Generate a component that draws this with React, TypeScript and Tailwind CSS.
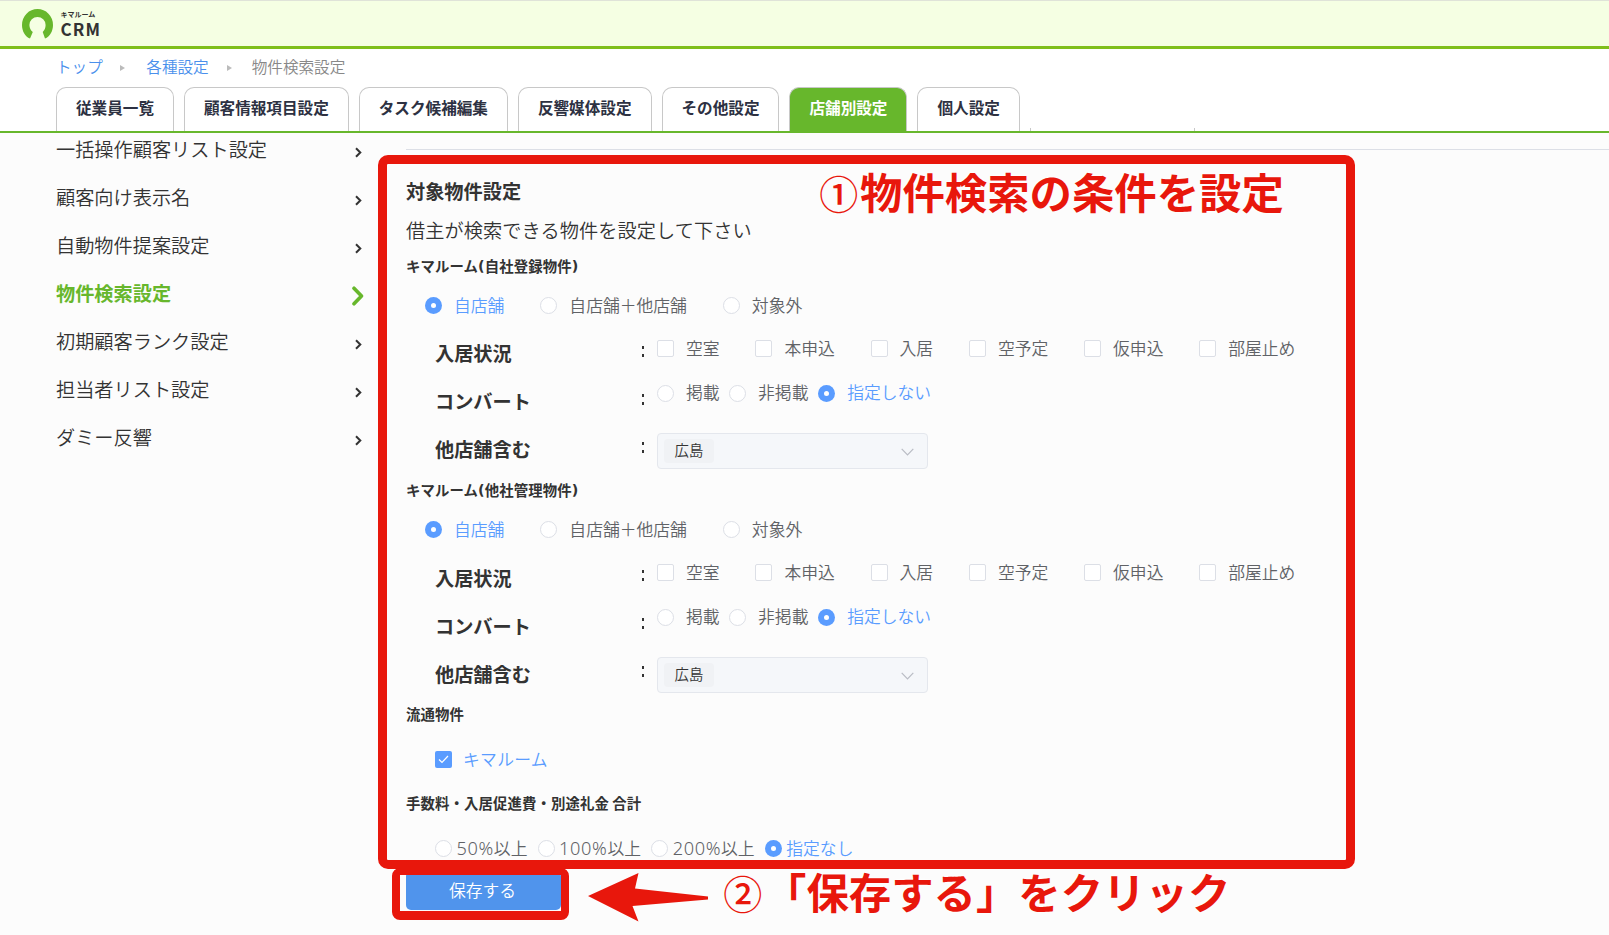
import React from 'react';

const tabs = ['従業員一覧', '顧客情報項目設定', 'タスク候補編集', '反響媒体設定', 'その他設定', '店舗別設定', '個人設定'];
const menu = [
  '一括操作顧客リスト設定',
  '顧客向け表示名',
  '自動物件提案設定',
  '物件検索設定',
  '初期顧客ランク設定',
  '担当者リスト設定',
  'ダミー反響',
];

function Radio({ label, checked, gap = 'gap-[12px]' }: { label: React.ReactNode; checked?: boolean; gap?: string }) {
  return (
    <label className={`flex items-center whitespace-nowrap ${gap} ${checked ? 'text-[#5a9cff]' : 'text-[#606266]'}`}>
      <span
        className={`flex size-[17px] shrink-0 items-center justify-center rounded-full ${
          checked ? 'bg-[#5a9cff]' : 'border border-[#dcdfe6] bg-white'
        }`}
      >
        {checked && <span className="size-[5px] rounded-full bg-white" />}
      </span>
      <span>{label}</span>
    </label>
  );
}

function Check({ label, checked }: { label: string; checked?: boolean }) {
  return (
    <label className={`flex items-center whitespace-nowrap ${checked ? 'gap-[11px] tracking-[0.3px] text-[#5a9cff]' : 'gap-[12px] text-[#606266]'}`}>
      <span
        className={`flex size-[17px] shrink-0 items-center justify-center rounded-[2px] ${
          checked ? 'bg-[#5a9cff]' : 'border border-[#dcdfe6] bg-white'
        }`}
      >
        {checked && (
          <svg width="11" height="9" viewBox="0 0 11 9" fill="none" stroke="white" strokeWidth="1.2">
            <path d="M1 4.5 4 7.5 10 1" />
          </svg>
        )}
      </span>
      <span>{label}</span>
    </label>
  );
}

/* Latin digits and signs are set wider than the Japanese face's own */
function Latin({ children }: { children: string }) {
  return <span className="font-['Noto_Sans'] text-[18.2px] leading-none font-light tracking-[0.6px]">{children}</span>;
}

function SubTitle({ children }: { children: React.ReactNode }) {
  return <h3 className="flex h-[40px] items-center pb-[1.5px] text-[14.4px] font-bold tracking-[0.1px] whitespace-pre">{children}</h3>;
}

function Field({ label, nudge, height, children }: { label: string; nudge: string; height: string; children: React.ReactNode }) {
  return (
    <div className="flex h-[48px] items-start pl-[29px]">
      <div className={`flex h-[48px] w-[203px] items-center text-[19.2px] font-bold ${nudge}`}>{label}</div>
      <div className="flex h-[43px] w-[19px] items-center pl-[4px]">
        <span className="flex h-[11px] w-[2px] flex-col justify-between">
          <i className="h-[3px] bg-[#333]" />
          <i className="h-[3px] bg-[#333]" />
        </span>
      </div>
      <div className={`flex items-center ${height}`}>{children}</div>
    </div>
  );
}

function Section({ name, nudge }: { name: string; nudge: string }) {
  return (
    <section className="h-[224px]">
      <SubTitle>
        キマルーム
        <span className="font-['DejaVu_Sans'] leading-none">(</span>
        {name}
        <span className="font-['DejaVu_Sans'] leading-none">)</span>
      </SubTitle>
      <div className="flex h-[38px] items-center gap-[36px] pl-[19px] text-[16.8px]">
        <Radio label="自店舗" checked />
        <Radio label="自店舗＋他店舗" />
        <Radio label="対象外" />
      </div>
      <div className="pt-[5px] text-[16.8px]">
        <Field label="入居状況" nudge={nudge} height="h-[38px] gap-[35.8px]">
          {['空室', '本申込', '入居', '空予定', '仮申込', '部屋止め'].map((t) => (
            <Check key={t} label={t} />
          ))}
        </Field>
        <Field label="コンバート" nudge={nudge} height="h-[31px] gap-[9.5px]">
          <Radio label="掲載" />
          <Radio label="非掲載" />
          <Radio label="指定しない" gap="gap-[12.3px]" checked />
        </Field>
        <Field label="他店舗含む" nudge={nudge} height="h-[51px]">
          <div className="flex h-[36px] w-[271px] items-center justify-between rounded-[4px] border border-[#e4e7ed] bg-[#f5f7fa] pr-[13px] pl-[6px]">
            <span className="mb-[1px] flex h-[24px] w-[50px] items-center justify-center rounded-[4px] bg-[#f0f2f5] pb-[2px] text-[14.4px] text-[#333]">
              広島
            </span>
            <svg width="13" height="8" viewBox="0 0 13 8" fill="none" stroke="#b9bcc4" strokeWidth="1.2" className="mt-[2px]">
              <path d="M0.7 0.9 6.5 6.9 12.3 0.9" />
            </svg>
          </div>
        </Field>
      </div>
    </section>
  );
}

const note = 'absolute text-[42.4px] leading-[64px] font-bold whitespace-nowrap text-[#e8170c] [text-shadow:0_0_3px_#fff,0_0_3px_#fff,0_0_4px_#fff]';
const noteNumber = 'inline-block w-[42.5px] text-center text-[39px] font-medium';

export default function App() {
  return (
    <div className="relative h-[935px] w-[1609px] overflow-hidden bg-[#fcfcfc] font-['Noto_Sans_CJK_JP',sans-serif] font-[350] text-[#333]">
      <header className="flex h-[49px] items-start border-t border-b-3 border-t-[#dfe3d8] border-b-[#7fbf1c] bg-[#f5ffe3] pt-[8px] pl-[22px]">
        <svg width="31" height="30" viewBox="0 0 31 30">
          <path
            fill="#67b72c"
            d="M8 29.6 C3 27.5 0 22 0 16 A15.5 15.9 0 0 1 31 16 C31 22 28 27.5 23 29.6 L20.7 23 C22.5 21.3 23.6 18.8 23.6 16 A8.1 8.1 0 0 0 7.4 16 C7.4 18.8 8.8 21.5 10.8 23 Z"
          />
        </svg>
        <div className="ml-[7.5px] pt-[1px] font-bold text-[#333]">
          <div className="h-[9px] text-[7px] leading-[9px]">キマルーム</div>
          <div className="text-[17px] leading-[20px] tracking-[1.1px]">CRM</div>
        </div>
      </header>

      <nav className="flex h-[84px] flex-col justify-between border-b-2 border-[#67b72c] bg-white pl-[56px]">
        <div className="flex h-[35px] items-center text-[15.6px]">
          <a className="text-[#4a90ec]">トップ</a>
          <svg width="5" height="6" viewBox="0 0 5 6" className="mt-[3px] mr-[21px] ml-[17.5px]">
            <path d="M0 0 5 3 0 6Z" fill="#bbb" />
          </svg>
          <a className="text-[#4a90ec]">各種設定</a>
          <svg width="5" height="6" viewBox="0 0 5 6" className="mt-[3px] mr-[20px] ml-[18px]">
            <path d="M0 0 5 3 0 6Z" fill="#bbb" />
          </svg>
          <span className="text-[#888]">物件検索設定</span>
        </div>
        <div className="flex items-end gap-[10px]">
          {tabs.map((t) => (
            <div
              key={t}
              className={`flex h-[44px] items-center rounded-t-[10px] border border-b-0 border-[#c8c8c8] px-[19px] pb-[3px] text-[15.6px] font-bold whitespace-nowrap ${
                t === '店舗別設定' ? 'bg-[#67b72c] text-white' : 'bg-white text-[#2d3142]'
              }`}
            >
              {t}
            </div>
          ))}
          <div className="h-[3px] w-[165px] border-x border-[#c8c8c8]" />
        </div>
      </nav>

      <div className="flex">
        <aside className="-mt-[8px] w-[406px] pl-[56px]">
          {menu.map((m) => {
            const on = m === '物件検索設定';
            return (
              <div key={m} className={`flex h-[48px] items-center text-[19.2px] ${on ? 'font-bold text-[#67b72c]' : ''}`}>
                <span className="w-[302px]">{m}</span>
                {on ? (
                  <svg width="12" height="20" viewBox="0 0 12 20" fill="none" stroke="#67b72c" strokeWidth="3.6" strokeLinecap="round" strokeLinejoin="round" className="mt-[6px] -ml-[6px]">
                    <path d="M2 2.2 9.5 10 2 17.8" />
                  </svg>
                ) : (
                  <svg width="7" height="11" viewBox="0 0 7 11" fill="none" stroke="#333" strokeWidth="2" className="mt-[7px] -ml-[3px]">
                    <path d="M1 1.2 5.3 5.5 1 9.8" />
                  </svg>
                )}
              </div>
            );
          })}
        </aside>

        <main className="flex-1 pt-[16px]">
          <hr className="mb-[17px] border-[#dcdfe6]" />
          <h2 className="flex h-[48px] items-center text-[19.2px] font-bold">対象物件設定</h2>
          <p className="flex h-[31.5px] items-center text-[19.2px] tracking-[0.08px]">借主が検索できる物件を設定して下さい</p>
          <Section name="自社登録物件" nudge="pb-[1px]" />
          <Section name="他社管理物件" nudge="pt-[1px]" />
          <SubTitle>流通物件</SubTitle>
          <div className="flex h-[49px] items-center pt-[1px] pl-[29px] text-[16.8px]">
            <Check label="キマルーム" checked />
          </div>
          <SubTitle>手数料・入居促進費・別途礼金 合計</SubTitle>
          <div className="flex h-[49px] items-center gap-[10.2px] pt-[1px] pl-[29px] text-[16.8px]">
            <Radio label={<><Latin>50%</Latin>以上</>} gap="gap-[4.5px]" />
            <Radio label={<><Latin>100%</Latin>以上</>} gap="gap-[4.5px]" />
            <Radio label={<><Latin>200%</Latin>以上</>} gap="gap-[4.5px]" />
            <Radio label="指定なし" checked gap="gap-[4.5px]" />
          </div>
          <button className="-mt-[2px] flex h-[39.5px] w-[155px] items-center justify-center rounded-[5px] bg-[#5094ec] pr-[2px] text-[16.8px] text-white">
            保存する
          </button>
        </main>
      </div>

      {/* Annotations drawn over the page */}
      <div className="absolute top-[155px] left-[378px] h-[714px] w-[977px] rounded-[10px] border-9 border-[#e8170c]" />
      <div className="absolute top-[868px] left-[392px] h-[52px] w-[177px] rounded-[8px] border-x-8 border-t-7 border-b-9 border-[#e8170c]" />
      <svg className="absolute top-[872px] left-[587px]" width="122" height="51" viewBox="587 872 122 51">
        <path fill="#e8170c" d="M588 896 638.5 873 635 888.5 708 896.5V899.5L632.5 906 638.5 921.5Z" />
      </svg>
      <div className={`top-[159px] left-[817.5px] ${note}`}>
        <span className={noteNumber}>①</span>物件検索の条件を設定
      </div>
      <div className={`top-[859px] left-[721.5px] ${note}`}>
        <span className={noteNumber}>②</span>「保存する」をクリック
      </div>
    </div>
  );
}
